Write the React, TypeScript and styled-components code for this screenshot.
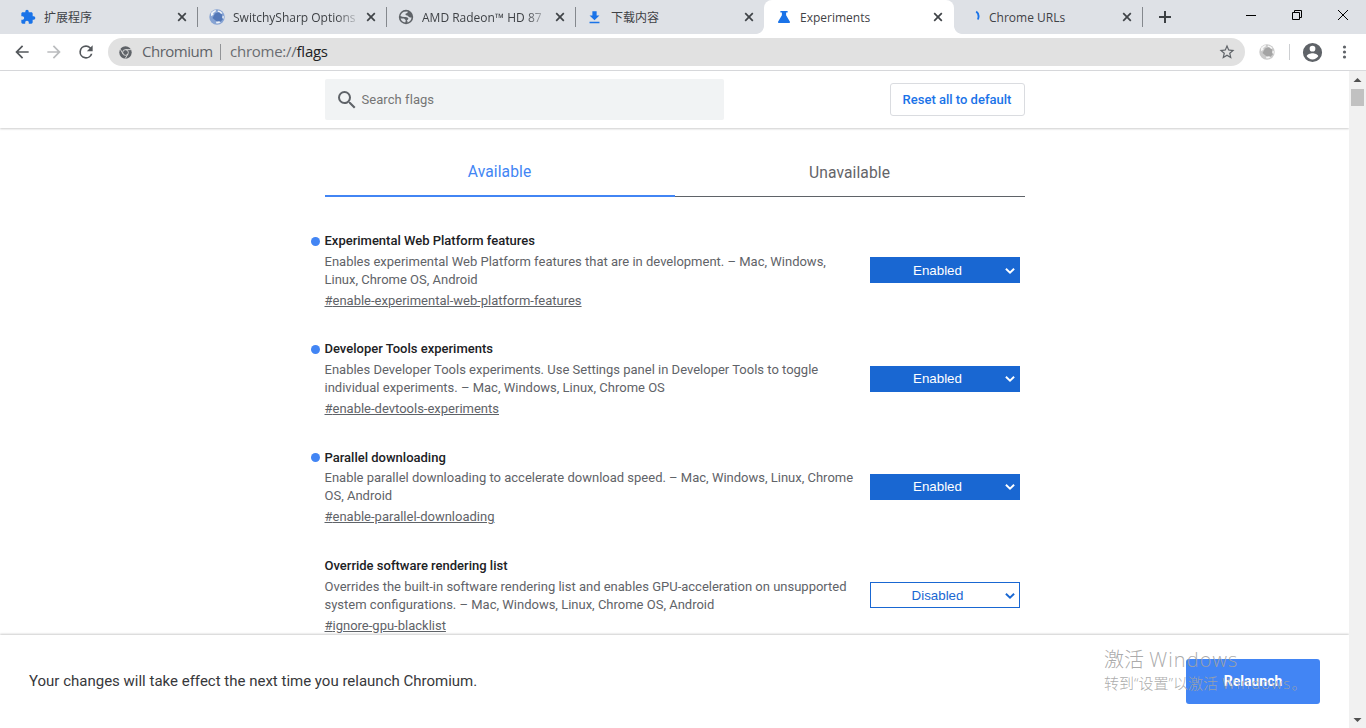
import React from 'react';
import styled, { createGlobalStyle } from 'styled-components';

const ui = `"Open Sans", "Noto Sans CJK SC", sans-serif`;
const roboto = `Roboto, "Noto Sans CJK SC", sans-serif`;

const Global = createGlobalStyle`
  * { box-sizing: border-box; }
  html, body { margin: 0; overflow: hidden; }
  body { font-family: ${roboto}; background: #fff; }
  svg { display: block; flex: none; }
`;

const Window = styled.div`
  width: 1366px;
  height: 728px;
  display: flex;
  flex-direction: column;
  position: relative;
  overflow: hidden;
`;

/* ---------- tab strip ---------- */
const TabStrip = styled.div`
  height: 34px;
  flex: none;
  background: #dee1e6;
  padding-left: 8px;
  display: flex;
`;

const BrowserTab = styled.div<{ $active?: boolean; $divider?: boolean }>`
  position: relative;
  width: ${p => (p.$active ? '190px' : '189px')};
  margin-right: ${p => (p.$active ? '-1px' : '0')};
  height: 34px;
  padding: 0 8px 0 12px;
  display: flex;
  align-items: center;
  background: ${p => (p.$active ? '#fff' : 'transparent')};
  border-radius: 8px 8px 0 0;
  &::after {
    content: '';
    display: ${p => (p.$divider ? 'block' : 'none')};
    position: absolute;
    right: -1px;
    top: 7px;
    width: 1px;
    height: 20px;
    background: #84888d;
  }
`;

const TabCurve = styled.i<{ $side: 'left' | 'right' }>`
  position: absolute;
  bottom: 0;
  ${p => p.$side}: -8px;
  width: 8px;
  height: 8px;
  background: radial-gradient(circle at ${p => (p.$side === 'left' ? '0 0' : '100% 0')}, transparent 7.5px, #fff 8.2px);
`;

const Favicon = styled.span`
  width: 15px;
  height: 16px;
  display: flex;
  align-items: center;
  justify-content: center;
`;

const TabTitle = styled.span<{ $fade?: boolean }>`
  width: 126px;
  margin-left: 9px;
  padding-top: 1px;
  font: 12px/20px ${ui};
  color: #3f4246;
  white-space: nowrap;
  overflow: hidden;
  ${p => p.$fade && 'mask-image: linear-gradient(90deg, #000 104px, transparent 128px);'}
`;

const TabClose = styled.span`
  margin-left: 7px;
  width: 10px;
`;

const NewTab = styled.div`
  width: 46px;
  display: flex;
  align-items: center;
  justify-content: center;
`;

const WindowControls = styled.div`
  margin-left: auto;
  height: 29px;
  display: flex;
  align-items: center;
`;

const WindowButton = styled.div`
  width: 46px;
  display: flex;
  justify-content: center;
`;

/* ---------- toolbar ---------- */
const Toolbar = styled.div`
  height: 37px;
  flex: none;
  display: flex;
  align-items: center;
  border-bottom: 1px solid #d9dadd;
  padding: 0 0 0 12px;
`;

const NavButtons = styled.div`
  display: flex;
  gap: 12px;
  width: 96px;
`;

const Omnibox = styled.div`
  width: 1137px;
  height: 28px;
  border-radius: 14px;
  background: #e1e1e1;
  display: flex;
  align-items: center;
  padding: 0 9px 0 11px;
`;

const SiteName = styled.span`
  margin: -3px 0 0 10px;
  width: 78px;
  font: 15px/20px ${ui};
  letter-spacing: -0.5px;
  color: #5f6368;
`;

const UrlDivider = styled.span`
  width: 1px;
  height: 16px;
  background: #929497;
`;

const Url = styled.span`
  margin: -3px 0 0 9px;
  flex: 1;
  font: 15px/20px ${ui};
  letter-spacing: -0.25px;
  color: #6a6d71;
  b { font-weight: 400; color: #202124; }
`;

const ToolbarActions = styled.div`
  flex: 1;
  display: flex;
  align-items: center;
  padding-left: 14px;
`;

const ToolbarDivider = styled.span`
  width: 1px;
  height: 16px;
  margin: 0 11px 0 14px;
  background: #cdcfd2;
`;

/* ---------- page ---------- */
const Viewport = styled.div`
  flex: 1;
  min-height: 0;
  display: flex;
`;

const Page = styled.div`
  flex: 1;
  display: flex;
  flex-direction: column;
  min-width: 0;
`;

const Header = styled.header`
  height: 57px;
  flex: none;
  display: flex;
  justify-content: center;
  box-shadow: 0 1px 2px rgba(0, 0, 0, 0.2);
`;

const HeaderContent = styled.div`
  width: 700px;
  display: flex;
  align-items: center;
  justify-content: space-between;
`;

const Search = styled.div`
  width: 399px;
  height: 41px;
  border-radius: 2px;
  background: #f1f3f4;
  display: flex;
  align-items: center;
  gap: 3px;
  padding-left: 10px;
  font: 13px/20px ${roboto};
  letter-spacing: 0.06px;
  color: #757575;
`;

const ResetButton = styled.button`
  width: 135px;
  height: 33px;
  padding: 0;
  border: 1px solid #dadce0;
  border-radius: 3px;
  background: #fff;
  color: #1a73e8;
  font: 500 13px/20px ${roboto};
  white-space: nowrap;
`;

const Body = styled.main`
  flex: 1;
  min-height: 0;
  overflow: hidden;
  display: flex;
  flex-direction: column;
  align-items: center;
  padding-top: 20px;
`;

const TabBar = styled.div`
  width: 700px;
  height: 49px;
  flex: none;
  display: flex;
`;

const PageTab = styled.div<{ $selected?: boolean }>`
  flex: 1;
  text-align: center;
  font: 15.6px/20px ${roboto};
  letter-spacing: 0.1px;
  padding-top: ${p => (p.$selected ? 14 : 15)}px;
  color: ${p => (p.$selected ? '#4285f4' : '#646468')};
  border-bottom: ${p => (p.$selected ? '2px solid #4285f4' : '1px solid #5f6368')};
`;

const FlagList = styled.div`
  width: 700px;
  flex: none;
  padding-top: 33.3px;
`;

const FlagRow = styled.div`
  height: 108.33px;
  margin-left: -14px;
  display: flex;
`;

const DotColumn = styled.div`
  width: 14px;
  padding-top: 6.5px;
`;

const Dot = styled.div`
  width: 9px;
  height: 9px;
  border-radius: 50%;
  background: #4285f4;
`;

const FlagText = styled.div`
  width: 545px;
  padding-top: 0.7px;
  font: 13px/18px ${roboto};
  color: #5f6368;
`;

const FlagName = styled.div`
  font-weight: 500;
  line-height: 20px;
  color: #202124;
`;

const FlagDescription = styled.div`
  margin-top: 1.8px;
  white-space: pre-line;
`;

const FlagLink = styled.a`
  display: block;
  margin-top: 2.95px;
  text-decoration: underline;
`;

const FlagSelect = styled.div<{ $on: boolean }>`
  width: 150px;
  height: 26px;
  margin-top: 26.9px;
  padding: 1px 4px 0 0;
  display: flex;
  align-items: center;
  border: 1px solid #1967d2;
  background: ${p => (p.$on ? '#1967d2' : '#fff')};
  color: ${p => (p.$on ? '#fff' : '#1967d2')};
  font: 13.333px/20px "Liberation Sans", Arial, sans-serif;
  span { flex: 1; text-align: center; }
`;

const Scrollbar = styled.div`
  width: 17px;
  background: #f1f1f1;
  display: flex;
  flex-direction: column;
  align-items: center;
  justify-content: space-between;
  padding: 7px 0 6px;
`;

const Thumb = styled.div`
  width: 13px;
  height: 17px;
  margin-top: 7px;
  background: #c1c1c1;
`;

const RestartBar = styled.footer`
  position: absolute;
  left: 0;
  bottom: 0;
  width: 1349px;
  height: 93px;
  padding: 0 29px;
  background: #fff;
  box-shadow: 0 -1px 2px rgba(0, 0, 0, 0.2);
  clip-path: inset(-4px 0 0 0);
  display: flex;
  align-items: center;
  justify-content: space-between;
  font: 15px/20px ${roboto};
  color: #37383b;
`;

const RestartMessage = styled.span`
  padding-bottom: 2px;
`;

const RelaunchButton = styled.button`
  width: 134px;
  height: 45px;
  padding: 0 0 2px;
  border: 0;
  border-radius: 3px;
  background: #4285f4;
  color: #fff;
  font: 700 14px/20px ${roboto};
`;

const Watermark = styled.div`
  position: absolute;
  left: 1104px;
  top: 646px;
  color: rgba(163, 163, 163, 0.92);
  font-family: ${ui};
  font-weight: 300;
  white-space: nowrap;
`;

const WatermarkTitle = styled.div`
  font-size: 20px;
  line-height: 28px;
  span { letter-spacing: 1.1px; }
`;

const WatermarkText = styled.div`
  font-size: 15px;
  line-height: 19px;
  span { letter-spacing: 1.2px; }
`;

/* ---------- icons ---------- */
const Material = ({ d, size, color }: { d: string; size: number; color: string }) => (
  <svg width={size} height={size} viewBox="0 0 24 24" fill={color}><path d={d} /></svg>
);

const PUZZLE = 'M20.5 11H19V7c0-1.1-.9-2-2-2h-4V3.5a2.5 2.5 0 0 0-5 0V5H4c-1.1 0-1.99.9-1.99 2v3.8H3.5c1.49 0 2.7 1.21 2.7 2.7s-1.21 2.7-2.7 2.7H2V20c0 1.1.9 2 2 2h3.8v-1.5c0-1.49 1.21-2.7 2.7-2.7s2.7 1.21 2.7 2.7V22H17c1.1 0 2-.9 2-2v-4h1.5a2.5 2.5 0 0 0 0-5z';
const DOWNLOAD = 'M19 9h-4V3H9v6H5l7 7 7-7zM5 18v2h14v-2H5z';
const BACK = 'M20 11H7.83l5.59-5.59L12 4l-8 8 8 8 1.41-1.41L7.83 13H20v-2z';
const FORWARD = 'M12 4l-1.41 1.41L16.17 11H4v2h12.17l-5.58 5.59L12 20l8-8z';
const RELOAD = 'M17.65 6.35A7.96 7.96 0 0 0 12 4a8 8 0 1 0 7.73 10h-2.08A6 6 0 1 1 12 6c1.66 0 3.14.69 4.22 1.78L13 11h7V4l-2.35 2.35z';
const STAR = 'M22 9.24l-7.19-.62L12 2 9.19 8.63 2 9.24l5.46 4.73L5.82 21 12 17.27 18.18 21l-1.63-7.03L22 9.24zM12 15.4l-3.76 2.27 1-4.28-3.32-2.88 4.38-.38L12 6.1l1.71 4.04 4.38.38-3.32 2.88 1 4.28L12 15.4z';
const ACCOUNT = 'M12 2a10 10 0 1 0 0 20 10 10 0 0 0 0-20zm0 3a3 3 0 1 1 0 6 3 3 0 0 1 0-6zm0 14.2a7.2 7.2 0 0 1-6-3.22c.03-1.99 4-3.08 6-3.08 1.99 0 5.97 1.09 6 3.08a7.2 7.2 0 0 1-6 3.22z';
const SEARCH = 'M15.5 14h-.79l-.28-.27A6.47 6.47 0 0 0 16 9.5 6.5 6.5 0 1 0 9.5 16c1.61 0 3.09-.59 4.23-1.57l.27.28v.79l5 4.99L20.49 19l-4.99-5zm-6 0a4.5 4.5 0 1 1 0-9 4.5 4.5 0 0 1 0 9z';

const Cross = () => (
  <svg width="10" height="10" viewBox="0 0 10 10" stroke="#3f4347" strokeWidth="1.7"><path d="M1.2 1.2 8.8 8.8M8.8 1.2 1.2 8.8" /></svg>
);

const Globe = ({ base, shade, land }: { base: string; shade: string; land: string }) => (
  <svg width="16" height="16" viewBox="0 0 16 16">
    <circle cx="8" cy="8" r="7.7" fill={base} />
    <path d="M6 4.500 10 3l3.500 3 .3 4.500L10 14l-3.500-2.500L3.500 9z" fill={shade} />
    <path d="M1.800 4.200C3 2.200 5 1 7 .9L6.500 2.800 4.300 4l.2 1.800-2.300 1.400zM9 1.400c1.900.2 3.500 1.200 4.600 2.700l-1.400.8-1.800-1.600-1.700-.3zM13.600 6.200l1.400 1.600-.8 2.400-1-1.600zM7 12.700l3.200-.5 1.600 1.100c-1.300.9-2.800 1.300-4.400 1.200z" fill={land} />
  </svg>
);

const GreyGlobe = () => (
  <svg width="16" height="16" viewBox="0 0 16 16">
    <circle cx="8" cy="8" r="7.200" fill="#5f6368" />
    <path d="M10.200 2.800c.2 1.300-.6 1.500-1.500 1.700-.9.200-1.400.6-1.300 1.400.2 1 1.600.7 2.700.9 1.300.3 1.300 1.700 2.600 1.700h1.100c-.2 2.300-1.700 4.300-3.900 5.100.2-1-.1-1.600-.9-1.900-.8-.3-.5-1.500-1.200-2.100C6.900 8.900 4.400 8.800 2.200 8.600 2.100 6 3.800 3.600 6.200 2.700" fill="#5f6368" />
    <path d="M9.600 2.600c.3 1.300-.5 1.700-1.600 2-.8.2-.6 1.500.2 1.700 1.500.2 1.900.9 2.700 1.600.8.6 1.700.4 2.700.5-.2 2.300-1.900 4.400-4 5 0-.9-.2-1.500-.8-1.900.9-.6 1.700-1.400 1.500-2.300-.2-1.100-2.300-1.200-4-1.300-1.500 0-2.700-.3-3.900-.9.400-2 1.700-3.600 3.500-4.300z" fill="#dee1e6" />
    <path d="M2.600 9.400h3.200c.8 0 .9 1 1.600 1.300.5.300.4 1.500-.2 2.700-2.300-.3-4.100-1.900-4.600-4z" fill="#dee1e6" />
  </svg>
);

const Flask = () => (
  <svg width="14" height="14" viewBox="0 0 14 14" fill="#1a73e8"><path d="M3.400 1h7.200v1.600H9.100v2.600l3.700 6.200c.5.8 0 1.600-.9 1.600H2.100c-.9 0-1.400-.8-.9-1.600l3.700-6.200V2.600H3.400z" /></svg>
);

const Spinner = () => (
  <svg width="16" height="16" viewBox="0 0 16 16" fill="none" stroke="#1a73e8" strokeWidth="1.900"><path d="M11.200 2.500C14 4.500 14 7.500 12.900 10.500" /></svg>
);

const ChromiumMark = () => (
  <svg width="13" height="13" viewBox="0 0 13 13">
    <circle cx="6.500" cy="6.500" r="6.200" fill="#5f6368" />
    <circle cx="6.500" cy="6.500" r="2.850" fill="none" stroke="#e1e1e1" strokeWidth="0.9" />
    <path d="M6.500 3.650H12M4.030 7.930 1.300 3.200M8.970 7.930 6.200 12.600" stroke="#e1e1e1" strokeWidth="0.9" />
  </svg>
);

const Chevron = ({ color }: { color: string }) => (
  <svg width="10" height="8" viewBox="0 0 10 8" fill="none" stroke={color} strokeWidth="1.9"><path d="M.9 1.700 5 5.700l4.100-4" /></svg>
);

/* ---------- data ---------- */
const flags = [
  { name: 'Experimental Web Platform features', text: 'Enables experimental Web Platform features that are in development. – Mac, Windows,\nLinux, Chrome OS, Android', id: 'enable-experimental-web-platform-features', on: true },
  { name: 'Developer Tools experiments', text: 'Enables Developer Tools experiments. Use Settings panel in Developer Tools to toggle\nindividual experiments. – Mac, Windows, Linux, Chrome OS', id: 'enable-devtools-experiments', on: true },
  { name: 'Parallel downloading', text: 'Enable parallel downloading to accelerate download speed. – Mac, Windows, Linux, Chrome\nOS, Android', id: 'enable-parallel-downloading', on: true },
  { name: 'Override software rendering list', text: 'Overrides the built-in software rendering list and enables GPU-acceleration on unsupported\nsystem configurations. – Mac, Windows, Linux, Chrome OS, Android', id: 'ignore-gpu-blacklist', on: false },
];

const tabs = [
  { title: '扩展程序', icon: <Material d={PUZZLE} size={16} color="#1a73e8" />, divider: true },
  { title: 'SwitchySharp Options', icon: <Globe base="#86a3d3" shade="#5478b8" land="#eef2f8" />, divider: true, fade: true },
  { title: 'AMD Radeon™ HD 87', icon: <GreyGlobe />, divider: true, fade: true },
  { title: '下载内容', icon: <Material d={DOWNLOAD} size={17} color="#1a73e8" /> },
  { title: 'Experiments', icon: <Flask />, active: true },
  { title: 'Chrome URLs', icon: <Spinner />, divider: true },
];

export default function App() {
  return (
    <Window>
      <Global />
      <TabStrip>
        {tabs.map(t => (
          <BrowserTab key={t.title} $active={t.active} $divider={t.divider}>
            {t.active && <TabCurve $side="left" />}
            {t.active && <TabCurve $side="right" />}
            <Favicon>{t.icon}</Favicon>
            <TabTitle $fade={t.fade}>{t.title}</TabTitle>
            <TabClose><Cross /></TabClose>
          </BrowserTab>
        ))}
        <NewTab>
          <svg width="12" height="12" viewBox="0 0 12 12" stroke="#3c4043" strokeWidth="2"><path d="M6 0v12M0 6h12" /></svg>
        </NewTab>
        <WindowControls>
          <WindowButton><svg width="10" height="10" viewBox="0 0 10 10"><path d="M0 5.500h10" stroke="#000" /></svg></WindowButton>
          <WindowButton><svg width="10" height="10" viewBox="0 0 10 10" fill="none" stroke="#000"><path d="M.5 2.500h7v7h-7zM2.500 2.500v-2h7v7h-2" /></svg></WindowButton>
          <WindowButton><svg width="10" height="10" viewBox="0 0 10 10" stroke="#000"><path d="m0 0 10 10M10 0 0 10" /></svg></WindowButton>
        </WindowControls>
      </TabStrip>
      <Toolbar>
        <NavButtons>
          <Material d={BACK} size={20} color="#54585c" />
          <Material d={FORWARD} size={20} color="#babcbe" />
          <Material d={RELOAD} size={20} color="#54585c" />
        </NavButtons>
        <Omnibox>
          <ChromiumMark />
          <SiteName>Chromium</SiteName>
          <UrlDivider />
          <Url>chrome://<b>flags</b></Url>
          <Material d={STAR} size={18} color="#5f6368" />
        </Omnibox>
        <ToolbarActions>
          <Globe base="#cacaca" shade="#a4a4a4" land="#f6f6f6" />
          <ToolbarDivider />
          <Material d={ACCOUNT} size={23} color="#5f6368" />
          <svg width="40" height="14" viewBox="0 0 40 14" fill="#5f6368"><circle cx="20.500" cy="2" r="1.600" /><circle cx="20.500" cy="7" r="1.600" /><circle cx="20.500" cy="12" r="1.600" /></svg>
        </ToolbarActions>
      </Toolbar>
      <Viewport>
        <Page>
          <Header>
            <HeaderContent>
              <Search><Material d={SEARCH} size={24} color="#5f6368" />Search flags</Search>
              <ResetButton>Reset all to default</ResetButton>
            </HeaderContent>
          </Header>
          <Body>
            <TabBar>
              <PageTab $selected>Available</PageTab>
              <PageTab>Unavailable</PageTab>
            </TabBar>
            <FlagList>
              {flags.map(f => (
                <FlagRow key={f.id}>
                  <DotColumn>{f.on && <Dot />}</DotColumn>
                  <FlagText>
                    <FlagName>{f.name}</FlagName>
                    <FlagDescription>{f.text}</FlagDescription>
                    <FlagLink>#{f.id}</FlagLink>
                  </FlagText>
                  <FlagSelect $on={f.on}>
                    <span>{f.on ? 'Enabled' : 'Disabled'}</span>
                    <Chevron color={f.on ? '#fff' : '#1967d2'} />
                  </FlagSelect>
                </FlagRow>
              ))}
            </FlagList>
          </Body>
        </Page>
        <Scrollbar>
          <div>
            <svg width="13" height="4" viewBox="0 0 13 4"><path d="M2.500 4 6.500 0l4 4z" fill="#505050" /></svg>
            <Thumb />
          </div>
          <svg width="13" height="4" viewBox="0 0 13 4"><path d="M2.500 0 6.500 4l4-4z" fill="#505050" /></svg>
        </Scrollbar>
      </Viewport>
      <RestartBar>
        <RestartMessage>Your changes will take effect the next time you relaunch Chromium.</RestartMessage>
        <RelaunchButton>Relaunch</RelaunchButton>
      </RestartBar>
      <Watermark>
        <WatermarkTitle>激活 <span>Windows</span></WatermarkTitle>
        <WatermarkText>转到“设置”以激活 <span>Windows。</span></WatermarkText>
      </Watermark>
    </Window>
  );
}
